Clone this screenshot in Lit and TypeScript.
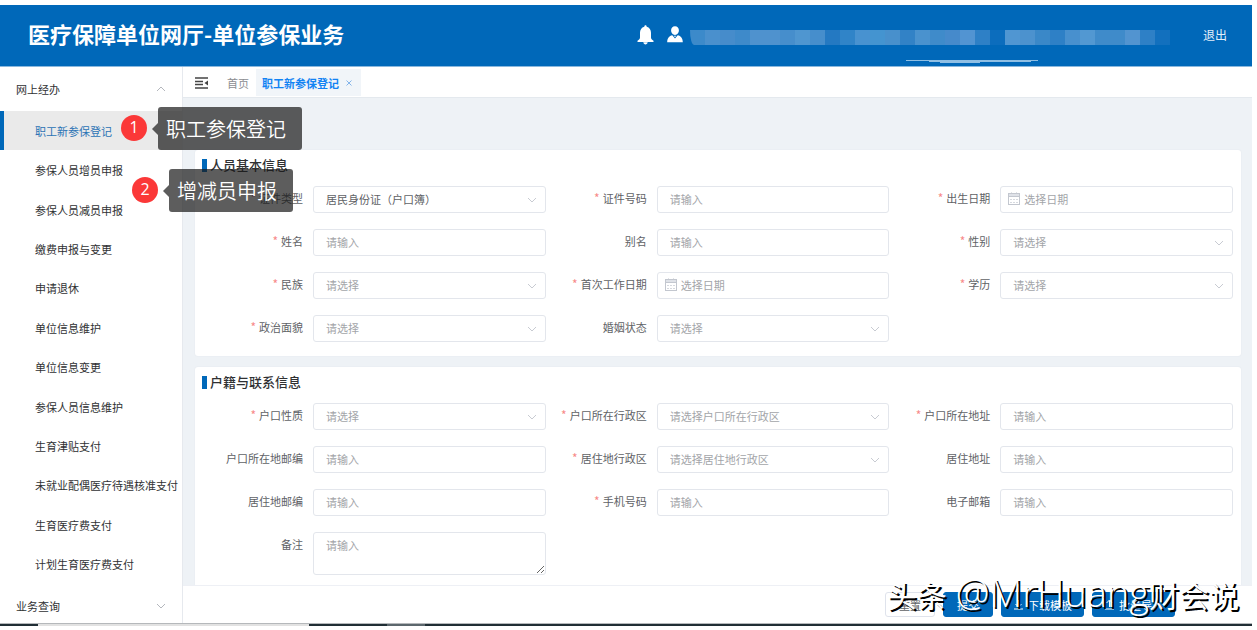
import { LitElement, html, css, svg, nothing } from "lit";
import { customElement, property } from "lit/decorators.js";
import { classMap } from "lit/directives/class-map.js";

type Kind = "text" | "select" | "date" | "area";

interface Field {
  id: string;
  label: string;
  kind: Kind;
  required?: boolean;
  hint?: string;
  value?: string;
}

const MENU = [
  "职工新参保登记",
  "参保人员增员申报",
  "参保人员减员申报",
  "缴费申报与变更",
  "申请退休",
  "单位信息维护",
  "单位信息变更",
  "参保人员信息维护",
  "生育津贴支付",
  "未就业配偶医疗待遇核准支付",
  "生育医疗费支付",
  "计划生育医疗费支付",
];

const BASIC: Field[] = [
  { id: "idType", label: "证件类型", kind: "select", required: true, value: "居民身份证（户口簿）" },
  { id: "idNo", label: "证件号码", kind: "text", required: true },
  { id: "birth", label: "出生日期", kind: "date", required: true },
  { id: "name", label: "姓名", kind: "text", required: true },
  { id: "alias", label: "别名", kind: "text" },
  { id: "sex", label: "性别", kind: "select", required: true },
  { id: "nation", label: "民族", kind: "select", required: true },
  { id: "firstWork", label: "首次工作日期", kind: "date", required: true },
  { id: "edu", label: "学历", kind: "select", required: true },
  { id: "politics", label: "政治面貌", kind: "select", required: true },
  { id: "marriage", label: "婚姻状态", kind: "select" },
];

const CONTACT: Field[] = [
  { id: "hkType", label: "户口性质", kind: "select", required: true },
  { id: "hkRegion", label: "户口所在行政区", kind: "select", required: true, hint: "请选择户口所在行政区" },
  { id: "hkAddr", label: "户口所在地址", kind: "text", required: true },
  { id: "hkZip", label: "户口所在地邮编", kind: "text" },
  { id: "liveRegion", label: "居住地行政区", kind: "select", required: true, hint: "请选择居住地行政区" },
  { id: "liveAddr", label: "居住地址", kind: "text" },
  { id: "liveZip", label: "居住地邮编", kind: "text" },
  { id: "mobile", label: "手机号码", kind: "text", required: true },
  { id: "email", label: "电子邮箱", kind: "text" },
  { id: "remark", label: "备注", kind: "area" },
];

const MASK = [
  "#3c8aca", "#4a90cd", "#468ccb", "#3e8aca", "#4f92ce", "#4f92ce", "#468ecc", "#4f96d0",
  "#468ecc", "#2479c2", "#3084c8", "#4892d0", "#4494d0", "#4890cc", "#3282c6", "#4a92ce",
  "#3f8bca", "#468acb", "#5294d2", "#2e80c6", "#0c6dbd", "#5096d2", "#4c92ce", "#3a88c8",
  "#2e80c6", "#4890ce", "#5298d2", "#3f8bca", "#3f8bca", "#5294d0", "#2e80c6", "#1270be",
];

const chevron = (up = false) => html`<svg class="chevron" viewBox="0 0 10 6" width="10" height="6" aria-hidden="true">
  ${up ? svg`<path d="M1 5 L5 1 L9 5" />` : svg`<path d="M1 1 L5 5 L9 1" />`}
</svg>`;

@customElement("form-card")
export class FormCard extends LitElement {
  @property() heading = "";
  @property({ attribute: false }) fields: Field[] = [];

  static styles = css`
    :host {
      display: block;
      background: #fff;
      border-radius: 3px;
      padding: 6px 8px 14px 7px;
      box-shadow: 0 0 2px rgba(0, 30, 60, 0.06);
    }
    .heading {
      display: flex;
      align-items: center;
      gap: 3px;
      margin: 0 0 12px;
      height: 18px;
      font-size: 13px;
      line-height: 18px;
      font-weight: 500;
      color: #303133;
    }
    .heading::before {
      content: "";
      width: 5px;
      height: 13px;
      background: #0068b9;
    }
    .grid {
      display: grid;
      grid-template-columns: repeat(3, 1fr);
      row-gap: 16px;
    }
    .field {
      display: flex;
    }
    .label {
      width: 101px;
      flex: none;
      padding-right: 10px;
      text-align: right;
      line-height: 25px;
      color: #606266;
      white-space: nowrap;
    }
    .star {
      color: #f78989;
      margin-right: 3px;
      font-size: 12px;
      line-height: 1;
    }
    .box {
      position: relative;
      flex: 1;
      min-width: 0;
      display: flex;
    }
    .control {
      appearance: none;
      box-sizing: border-box;
      width: 100%;
      height: 27px;
      margin: 0;
      padding: 0 12px 2px;
      border: 1px solid #e3e6ec;
      border-radius: 3px;
      background: #fff;
      font: inherit;
      color: #606266;
      outline: none;
    }
    .control::placeholder {
      color: #a3a5a9;
      opacity: 1;
    }
    .empty {
      color: #a3a5a9;
    }
    .date {
      padding-left: 23px;
    }
    .area {
      height: 43px;
      padding-top: 4px;
      line-height: 16px;
      resize: vertical;
    }
    .chevron {
      position: absolute;
      right: 9px;
      top: 11px;
      fill: none;
      stroke: #c8cbd2;
      pointer-events: none;
    }
    .calendar {
      position: absolute;
      left: 8px;
      top: 6px;
      fill: none;
      stroke: #c3c7cf;
      pointer-events: none;
    }
  `;

  private control(f: Field) {
    if (f.kind === "select") {
      return html`<select id=${f.id} class=${classMap({ control: true, empty: !f.value })}>
          <option>${f.value ?? f.hint ?? "请选择"}</option>
        </select>${chevron()}`;
    }
    if (f.kind === "area") {
      return html`<textarea id=${f.id} class="control area" placeholder="请输入"></textarea>`;
    }
    if (f.kind === "date") {
      return html`<input id=${f.id} class="control date" type="text" placeholder="选择日期" />
        <svg class="calendar" viewBox="0 0 12 13" width="12" height="13" aria-hidden="true">
          <path d="M1 2H11V4H1Z" fill="#dfe2e8" stroke="none" />
          <rect x="0.5" y="1.5" width="11" height="11" />
          <path d="M0.5 4.5H11.5M3.500 0.500V2M8.500 0.500V2" />
          <path d="M2 7.500H10M2 10.500H10" stroke-dasharray="2 1" stroke="#d6d9df" />
        </svg>`;
    }
    return html`<input id=${f.id} class="control" type="text" placeholder="请输入" />`;
  }

  render() {
    return html`<h2 class="heading">${this.heading}</h2>
      <div class="grid">
        ${this.fields.map(
          (f) => html`<div class="field">
            <label class="label" for=${f.id}>${f.required ? html`<span class="star">*</span>` : nothing}${f.label}</label>
            <div class="box">${this.control(f)}</div>
          </div>`
        )}
      </div>`;
  }
}

@customElement("app-root")
export class AppRoot extends LitElement {
  static styles = css`
    :host {
      display: flex;
      flex-direction: column;
      position: relative;
      box-sizing: border-box;
      height: 100vh;
      padding: 5px 5px 4px 0;
      overflow: hidden;
      background: #fff;
      font-family: "Noto Sans CJK SC", sans-serif;
      font-size: 11px;
      color: #303133;
    }
    .header {
      position: relative;
      flex: none;
      display: flex;
      align-items: center;
      box-sizing: border-box;
      height: 62px;
      padding: 0 25px 2px 28px;
      background: #0068b9;
      border-bottom: 1px solid #8ab8de;
      color: #fff;
    }
    .title {
      flex: 1;
      margin: 0;
      padding-bottom: 4px;
      font-size: 22px;
      line-height: 32px;
      font-weight: 700;
      white-space: nowrap;
    }
    .icons {
      display: flex;
      align-items: center;
      gap: 13px;
      margin-right: 7px;
      fill: #fff;
    }
    .mask {
      display: flex;
      margin: 5px 33px 0 0;
    }
    .cell {
      width: 15px;
      height: 15px;
    }
    .cell:first-child {
      border-bottom-left-radius: 4px 15px;
    }
    .logout {
      color: #e3effa;
      font-size: 12px;
      text-decoration: none;
    }
    .scratch {
      position: absolute;
      right: 214px;
      bottom: 3px;
      fill: #8fbfe4;
    }
    .body {
      flex: 1;
      min-height: 0;
      display: flex;
    }
    .side {
      flex: none;
      display: flex;
      flex-direction: column;
      width: 182px;
      border-right: 1px solid #e6e9ee;
    }
    .group {
      flex: none;
      display: flex;
      align-items: center;
      justify-content: space-between;
      height: 44px;
      padding: 0 16px;
      border: 0;
      background: none;
      font: inherit;
      color: #303133;
    }
    .last {
      height: 39px;
      padding-top: 5px;
    }
    .chevron {
      fill: none;
      stroke: #b4b7bd;
    }
    .menu {
      flex: 1;
      display: grid;
      grid-auto-rows: 1fr;
      min-height: 0;
      margin: 0;
      padding: 0;
      list-style: none;
    }
    .link {
      display: flex;
      align-items: center;
      box-sizing: border-box;
      height: 100%;
      padding-left: 35px;
      color: #303133;
      text-decoration: none;
      white-space: nowrap;
    }
    .active {
      padding-left: 31px;
      border-left: 4px solid #0068b9;
      background: #eaeaea;
      color: #2b73b5;
    }
    .main {
      flex: 1;
      min-width: 0;
      display: flex;
      flex-direction: column;
    }
    .tabs {
      flex: none;
      display: flex;
      align-items: center;
      box-sizing: border-box;
      height: 31px;
      padding: 1px 0 0 12px;
      border-bottom: 1px solid #e4e9ee;
    }
    .fold {
      display: flex;
      padding: 1px 0 0;
      border: 0;
      margin-right: 19px;
      background: none;
      color: #444;
    }
    .home {
      color: #8b8d91;
      margin-right: 7px;
      text-decoration: none;
    }
    .tab {
      display: flex;
      align-items: center;
      gap: 7px;
      height: 27px;
      padding: 0 9px 0 6px;
      background: #f1f5f9;
      color: #1283f3;
      font-weight: 700;
    }
    .close {
      display: flex;
      padding: 0;
      border: 0;
      background: none;
      color: #83b4ea;
    }
    .content {
      flex: 1;
      min-height: 0;
      overflow: hidden;
      display: flex;
      flex-direction: column;
      gap: 11px;
      padding: 52px 11px 0 12px;
      background: #eef2f6;
    }
    form-card {
      flex: none;
    }
    .footer {
      flex: none;
      display: flex;
      justify-content: flex-end;
      align-items: flex-start;
      gap: 8px;
      box-sizing: border-box;
      height: 38px;
      padding: 6px 77px 0 0;
      border-top: 1px solid #eef0f5;
    }
    .btn {
      display: flex;
      align-items: center;
      gap: 4px;
      height: 25px;
      padding: 0 13px;
      border: 1px solid #0068b9;
      border-radius: 3px;
      background: #0068b9;
      color: #fff;
      font: inherit;
    }
    .plain {
      border-color: #dfe3ec;
      background: #fff;
      color: #606266;
    }
    .wide {
      padding: 0 11px;
    }
    .strip {
      flex: none;
      display: flex;
      height: 2px;
      border-top: 1px solid #b5b8bb;
      background: #202e35;
    }
    .strip-gap {
      width: 38px;
    }
    .strip-light {
      width: 271px;
      background: #e2e2e2;
    }
    .strip-dark {
      width: 78px;
    }
    .strip-mid {
      width: 38px;
      background: #5c676d;
    }
    .note {
      position: absolute;
      display: flex;
      align-items: center;
      color: #fff;
      pointer-events: none;
    }
    .note-1 {
      left: 121px;
      top: 107px;
    }
    .note-2 {
      left: 132px;
      top: 169px;
    }
    .badge {
      width: 26px;
      height: 26px;
      margin: 0 5px 2px 0;
      border-radius: 50%;
      background: #fb3838;
      font: 16px/25px "Open Sans", sans-serif;
      text-align: center;
    }
    .tip {
      padding: 0 16px 0 8px;
      border-radius: 3px;
      background: rgba(24, 24, 24, 0.7);
      font-size: 20px;
      line-height: 43px;
      font-weight: 350;
    }
    .arrow {
      border: 6px solid transparent;
      border-left-width: 0;
      border-right-color: rgba(24, 24, 24, 0.7);
    }
    .watermark {
      position: absolute;
      right: 18px;
      bottom: 14px;
      display: flex;
      align-items: baseline;
      gap: 9px;
      color: #fff;
      font-size: 30px;
      line-height: 44px;
      text-shadow: 2px 2px 0 #000;
      white-space: nowrap;
      pointer-events: none;
    }
    .handle {
      font-family: "Open Sans", sans-serif;
      font-size: 38px;
      font-weight: 300;
    }
    .handle-cjk {
      font-family: "Noto Sans CJK SC", sans-serif;
      font-size: 30px;
      font-weight: 400;
    }
  `;

  render() {
    return html`
      <header class="header">
        <h1 class="title">医疗保障单位网厅-单位参保业务</h1>
        <div class="icons">
          <svg viewBox="0 0 17 20" width="17" height="20" role="img" aria-label="通知">
            <path d="M8.5 0.3c.8 0 1.2.6 1.2 1.5 2.8.7 4.3 3 4.3 6v4.700c0 1.500 1 2.400 2.500 3.300v1.200H.5v-1.200C2 14.900 3 14 3 12.500V7.800c0-3 1.500-5.300 4.300-6 0-.9.4-1.500 1.200-1.500zM6.300 17.300h4.400c-.2 1.300-1.100 2.200-2.200 2.200s-2-.9-2.200-2.200z" />
          </svg>
          <svg viewBox="0 0 16 17" width="16" height="17" role="img" aria-label="用户">
            <path d="M8 .2c2.500 0 3.900 1.700 3.900 4.100S10.300 9 8 9 4.100 6.700 4.100 4.300 5.500.2 8 .2zM5.300 9.300L8 12.600l2.700-3.300c3.200.8 5 2.800 5.100 6.900H.2c.1-4.100 1.900-6.100 5.100-6.900zM7.100 9.800h1.800l-.5 1.100h-.8z" />
          </svg>
        </div>
        <div class="mask">${MASK.map((c) => html`<span class="cell" style="background:${c}"></span>`)}</div>
        <a class="logout" href="#logout">退出</a>
        <svg class="scratch" viewBox="0 0 132 3" width="132" height="3" aria-hidden="true">
          <path d="M0 0H132V1H125V2H74V3H34V2H23V1H0Z" />
        </svg>
      </header>
      <div class="body">
        <nav class="side">
          <button class="group" type="button">网上经办 ${chevron(true)}</button>
          <ul class="menu">
            ${MENU.map((m, i) => html`<li><a class=${classMap({ link: true, active: i === 0 })} href="#menu">${m}</a></li>`)}
          </ul>
          <button class="group last" type="button">业务查询 ${chevron()}</button>
        </nav>
        <main class="main">
          <div class="tabs">
            <button class="fold" type="button" aria-label="收起菜单">
              <svg viewBox="0 0 13 12" width="13" height="12" fill="none" stroke="currentColor">
                <path d="M0 1H13M0 4.500H8M0 7.500H8M0 11H13" stroke-width="1.300" />
                <path d="M13 3.500V8.500L9.500 6Z" fill="currentColor" stroke="none" />
              </svg>
            </button>
            <a class="home" href="#home">首页</a>
            <div class="tab">
              职工新参保登记
              <button class="close" type="button" aria-label="关闭">
                <svg viewBox="0 0 6 6" width="6" height="6" stroke="currentColor"><path d="M.5.5L5.500 5.500M5.500.5L.5 5.500" /></svg>
              </button>
            </div>
          </div>
          <div class="content">
            <form-card heading="人员基本信息" .fields=${BASIC}></form-card>
            <form-card heading="户籍与联系信息" .fields=${CONTACT}></form-card>
          </div>
          <footer class="footer">
            <button class="btn plain" type="button">重置</button>
            <button class="btn" type="button">提交</button>
            <button class="btn wide" type="button">
              <svg viewBox="0 0 11 11" width="11" height="11" fill="none" stroke="currentColor"><path d="M5.500 1V7.500M2.500 5L5.500 8L8.500 5M1 10H10" /></svg>下载模板
            </button>
            <button class="btn wide" type="button">
              <svg viewBox="0 0 11 11" width="11" height="11" fill="none" stroke="currentColor"><path d="M5.500 8V1.500M2.500 4L5.500 1L8.500 4M1 10H10" /></svg>批量导入
            </button>
          </footer>
        </main>
      </div>
      <div class="strip">
        <span class="strip-gap"></span><span class="strip-light"></span><span class="strip-dark"></span><span class="strip-mid"></span>
      </div>
      <div class="note note-1"><span class="badge">1</span><span class="arrow"></span><span class="tip">职工参保登记</span></div>
      <div class="note note-2"><span class="badge">2</span><span class="arrow"></span><span class="tip">增减员申报</span></div>
      <div class="watermark"><span>头条</span><span class="handle">@MrHuang<span class="handle-cjk">财会说</span></span></div>
    `;
  }
}
